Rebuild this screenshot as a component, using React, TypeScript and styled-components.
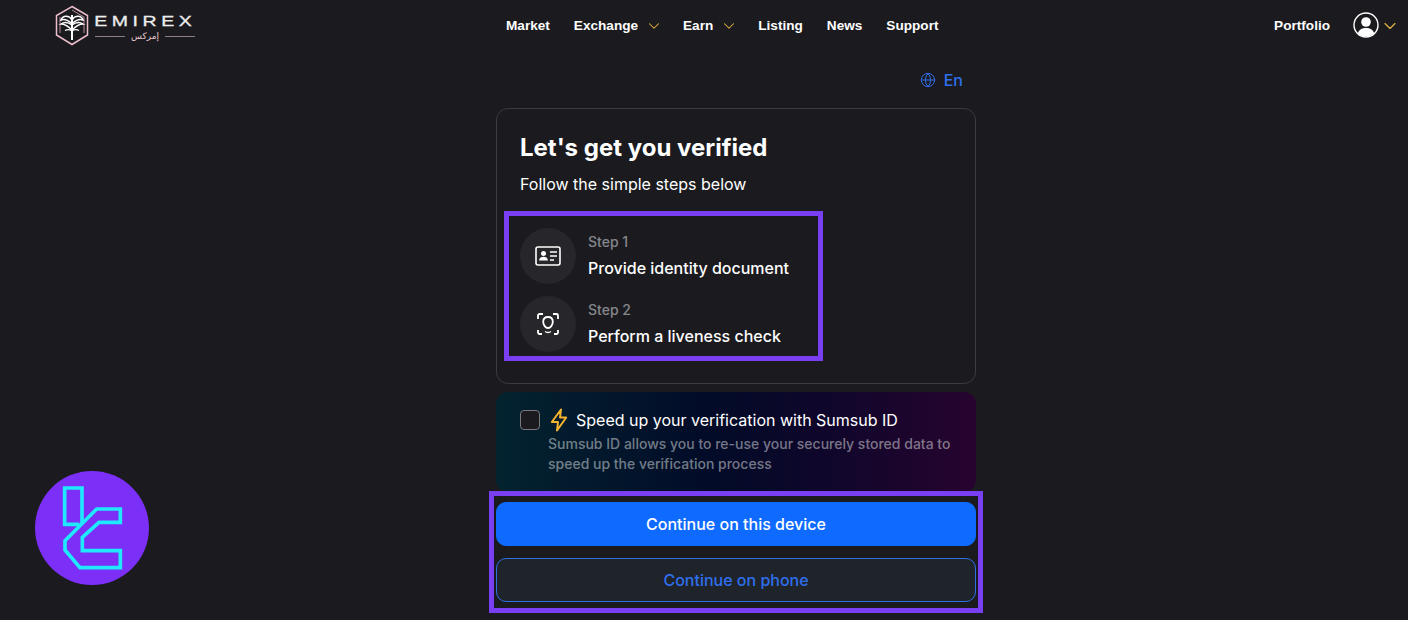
import React from 'react';
import styled, {createGlobalStyle} from "styled-components";
import {ChevronDown, Globe} from "lucide-react";

const GlobalStyle = createGlobalStyle`
  * {
    box-sizing: border-box;
  }

  html, body {
    margin: 0;
    height: 100%;
    background-color: #1b1b1f;
    overflow: hidden;
  }

  body {
    font-family: Inter, "Liberation Sans", sans-serif;
    color: #ffffff;
  }
`

const navItems = [
    {label: "Market"},
    {label: "Exchange", menu: true},
    {label: "Earn", menu: true},
    {label: "Listing"},
    {label: "News"},
    {label: "Support"},
]

const steps = [
    {step: "Step 1", title: "Provide identity document", icon: <IdCardIcon/>},
    {step: "Step 2", title: "Perform a liveness check", icon: <FaceScanIcon/>},
]

function IdCardIcon() {
    return (
        <svg width="26" height="20" viewBox="0 0 26 20" fill="none">
            <rect x="1" y="1" width="24" height="18" rx="2" stroke="#fff" strokeWidth="1.6"/>
            <circle cx="8.500" cy="7.500" r="2.500" fill="#fff"/>
            <path d="M4 14.500c.4-2.800 2.300-3.800 4.500-3.800s4.100 1 4.500 3.800z" fill="#fff"/>
            <path d="M15 6h7M15 10h7M15 14h4" stroke="#fff" strokeWidth="1.500"/>
        </svg>
    )
}

function FaceScanIcon() {
    return (
        <svg width="24" height="24" viewBox="0 0 24 24" fill="none" stroke="#fff" strokeWidth="1.800">
            <path d="M2 7V3.500C2 2.700 2.700 2 3.500 2H7M17 2h3.500c.8 0 1.500.7 1.500 1.500V7M2 18v2.500c0 .8.7 1.500 1.500 1.500H6M18 22h2.500c.8 0 1.500-.7 1.500-1.500V18"/>
            <path d="M12 5c-3 0-4.800 2-4.800 4.800 0 3.200 2.300 6.200 4.800 6.200s4.800-3 4.800-6.200C16.800 7 15 5 12 5z"/>
            <path d="M9 19.500c1 .7 2 1 3 1s2-.3 3-1" strokeWidth="1.400"/>
        </svg>
    )
}

function BoltIcon() {
    return (
        <svg width="18" height="24" viewBox="0 0 18 24" fill="none">
            <path d="M11 1.500 1.800 14H8L7 22.500 16.200 9.500H10z" stroke="#f5b32e" strokeWidth="2" strokeLinejoin="round"/>
        </svg>
    )
}

function LogoMark() {
    return (
        <svg width="36" height="41" viewBox="0 0 36 41" fill="none">
            <path d="M18 1.500 33.500 10.500V30L18 39.500 2.500 30V10.500z" stroke="#e8bcc8" strokeWidth="1.500"/>
            <path d="M18 5 30 12V28M6 28V12" stroke="#b98aa0" strokeWidth="1"/>
            <path d="M18 10V35" stroke="#fff" strokeWidth="2"/>
            <path d="M18 15C15 10 9 10 7 15c3-1 7 0 11 4M18 15c3-5 9-5 11 0-3-1-7 0-11 4" stroke="#fff" strokeWidth="1.500"/>
            <path d="M18 20c-4-3-8-3-11-1 4 0 7 2 11 6M18 20c4-3 8-3 11-1-4 0-7 2-11 6" stroke="#fff" strokeWidth="1.500"/>
            <path d="M18 26c-2-1.500-5-1.500-7-.5M18 26c2-1.500 5-1.500 7-.5" stroke="#fff" strokeWidth="1.300"/>
        </svg>
    )
}

function AvatarIcon() {
    return (
        <svg width="26" height="26" viewBox="0 0 26 26">
            <circle cx="13" cy="13" r="12" fill="#1b1b1f" stroke="#fff" strokeWidth="1.400"/>
            <circle cx="13" cy="10" r="4.800" fill="#fff"/>
            <path d="M4.800 21.500C6 17.500 9 16 13 16s7 1.500 8.200 5.500C19 23.600 16 24.600 13 24.600s-6-1-8.200-3.100z" fill="#fff"/>
        </svg>
    )
}

function BadgeMark() {
    return (
        <svg width="114" height="114" viewBox="30 33 342 342" fill="none">
            <path d="M163 193H119V84H171V190" stroke="#1fe9ff" strokeWidth="11"/>
            <path d="M286 147H215L120 242V270L165 323H286V272H172V232L222 187H286z" stroke="#1fe9ff" strokeWidth="11"/>
        </svg>
    )
}

export default function App() {
    return (
        <Page>
            <GlobalStyle/>
            <Header>
                <Logo>
                    <LogoMark/>
                    <LogoWords>
                        <LogoName>EMIREX</LogoName>
                        <LogoSub>إمركس</LogoSub>
                    </LogoWords>
                </Logo>
                <Nav>
                    {navItems.map(item => (
                        <NavItem key={item.label}>
                            {item.label}
                            {item.menu && <Chevron size={18} strokeWidth={1.4}/>}
                        </NavItem>
                    ))}
                </Nav>
                <UserArea>
                    <NavItem>Portfolio</NavItem>
                    <UserMenu>
                        <AvatarIcon/>
                        <Chevron size={20} strokeWidth={1.4}/>
                    </UserMenu>
                </UserArea>
            </Header>

            <Main>
                <LangRow>
                    <Globe size={16} strokeWidth={1.5}/>
                    En
                </LangRow>

                <Card>
                    <Title>Let's get you verified</Title>
                    <Subtitle>Follow the simple steps below</Subtitle>
                    <Steps>
                        {steps.map(s => (
                            <Step key={s.step}>
                                <StepIcon>{s.icon}</StepIcon>
                                <div>
                                    <StepLabel>{s.step}</StepLabel>
                                    <StepTitle>{s.title}</StepTitle>
                                </div>
                            </Step>
                        ))}
                    </Steps>
                </Card>

                <Promo>
                    <PromoHead>
                        <CheckBox/>
                        <BoltIcon/>
                        <PromoTitle>Speed up your verification with Sumsub ID</PromoTitle>
                    </PromoHead>
                    <PromoText>
                        Sumsub ID allows you to re-use your securely stored data to speed up the verification process
                    </PromoText>
                </Promo>

                <Actions>
                    <ActionButton $primary>Continue on this device</ActionButton>
                    <ActionButton>Continue on phone</ActionButton>
                </Actions>
            </Main>

            <Badge>
                <BadgeMark/>
            </Badge>
        </Page>
    );
}

const Page = styled.div`
  position: relative;
  height: 620px;
  overflow: hidden;
  background-color: #1b1b1f;
`

const Header = styled.header`
  display: flex;
  align-items: center;
  height: 50px;
  padding: 0 12px 0 54px;
`

const Logo = styled.div`
  display: flex;
  align-items: center;
  gap: 5px;
  width: 141px;
`

const LogoWords = styled.div`
  display: flex;
  flex-direction: column;
  align-items: center;
  width: 100px;
  padding-top: 4px;
`

const LogoName = styled.span`
  font-family: "Liberation Sans", sans-serif;
  font-size: 15px;
  line-height: 18px;
  letter-spacing: 3.500px;
  white-space: nowrap;
  color: #eeeeee;
  -webkit-text-stroke: 0.3px #eeeeee;
  transform: scaleX(1.3);
`

const LogoSub = styled.span`
  display: flex;
  align-items: center;
  gap: 6px;
  width: 100%;
  font-family: "DejaVu Sans", sans-serif;
  font-size: 9px;
  line-height: 12px;
  color: #e7c9d2;

  &::before, &::after {
    content: "";
    flex: 1;
    height: 1px;
    background-color: #8d7f86;
  }
`

const Nav = styled.nav`
  display: flex;
  align-items: center;
  gap: 24px;
  margin-left: 311px;
`

const NavItem = styled.span`
  display: flex;
  align-items: center;
  gap: 7px;
  font-family: "Liberation Sans", sans-serif;
  font-size: 13.600px;
  font-weight: 700;
  color: #ffffff;
  white-space: nowrap;
`

const Chevron = styled(ChevronDown)`
  color: #e3b341;
  margin-top: 2px;
  margin-right: -4px;
`

const UserArea = styled.div`
  display: flex;
  align-items: center;
  gap: 23px;
  margin-left: auto;
`

const UserMenu = styled.div`
  display: flex;
  align-items: center;
  gap: 1px;
`

const Main = styled.main`
  display: flex;
  flex-direction: column;
  width: 480px;
  margin-left: 496px;
`

const LangRow = styled.div`
  display: flex;
  align-items: center;
  justify-content: flex-end;
  gap: 8px;
  height: 58px;
  padding-right: 13px;
  padding-top: 2px;
  font-size: 16px;
  font-weight: 500;
  color: #2f6fed;
`

const Card = styled.section`
  height: 276px;
  padding: 23px 23px 0;
  border: 1px solid #3b3b40;
  border-radius: 12px;
`

const Title = styled.h1`
  margin: 0;
  font-size: 24px;
  font-weight: 700;
  line-height: 32px;
`

const Subtitle = styled.p`
  margin: 8px 0 0;
  font-size: 16px;
  line-height: 24px;
`

const Steps = styled.div`
  position: relative;
  display: flex;
  flex-direction: column;
  gap: 12px;
  width: 270px;
  margin-top: 32px;

  &::after {
    content: "";
    position: absolute;
    top: -17px;
    bottom: -9px;
    left: -16px;
    right: -33px;
    border: 5px solid #7a3ff2;
    pointer-events: none;
  }
`

const Step = styled.div`
  display: flex;
  align-items: center;
  gap: 12px;
`

const StepIcon = styled.div`
  display: flex;
  align-items: center;
  justify-content: center;
  flex: none;
  width: 56px;
  height: 56px;
  border-radius: 50%;
  background-color: #26262b;
`

const StepLabel = styled.div`
  font-size: 14px;
  font-weight: 500;
  line-height: 20px;
  color: #86868c;
`

const StepTitle = styled.div`
  margin-top: 6px;
  padding-bottom: 2px;
  font-size: 16px;
  font-weight: 500;
  line-height: 20px;
  white-space: nowrap;
`

const Promo = styled.section`
  height: 100px;
  margin-top: 8px;
  padding: 16px 24px 0;
  border-radius: 12px;
  background: linear-gradient(90deg, #03232f 0%, #020b28 45%, #10062b 70%, #27042f 100%);
`

const PromoHead = styled.div`
  display: flex;
  align-items: center;
  gap: 10px;
  height: 24px;
`

const CheckBox = styled.span`
  flex: none;
  width: 20px;
  height: 20px;
  border: 1px solid #77777c;
  border-radius: 4px;
  background-color: #1b1b1f;
`

const PromoTitle = styled.span`
  margin-left: -2px;
  font-size: 16px;
  font-weight: 400;
  line-height: 24px;
  white-space: nowrap;
`

const PromoText = styled.p`
  margin: 2px 0 0 28px;
  font-size: 14px;
  font-weight: 500;
  line-height: 20px;
  color: rgba(255, 255, 255, 0.45);
`

const Actions = styled.div`
  position: relative;
  display: flex;
  flex-direction: column;
  gap: 12px;
  margin-top: 10px;

  &::after {
    content: "";
    position: absolute;
    top: -11px;
    bottom: -11px;
    left: -7px;
    right: -7px;
    border: 5px solid #7a3ff2;
    pointer-events: none;
  }
`

const ActionButton = styled.button<{$primary?: boolean}>`
  height: 44px;
  border: 1px solid ${props => props.$primary ? "#0f6bff" : "#2f6fe0"};
  border-radius: 10px;
  background-color: ${props => props.$primary ? "#0f6bff" : "#1f242b"};
  color: ${props => props.$primary ? "#ffffff" : "#2f6fed"};
  font-family: Inter, "Liberation Sans", sans-serif;
  font-size: 16px;
  font-weight: 500;
`

const Badge = styled.div`
  position: absolute;
  left: 35px;
  top: 471px;
  display: flex;
  width: 114px;
  height: 114px;
  border-radius: 50%;
  background-color: #7b2ff7;
`
